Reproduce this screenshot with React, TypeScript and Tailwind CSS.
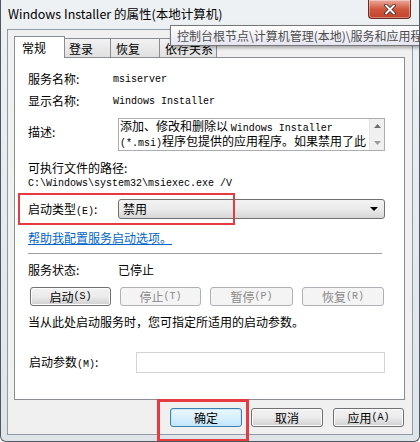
import React from "react";

const mono = "font-['Liberation_Mono',monospace] text-[10px]";

function M({ children }: { children: React.ReactNode }) {
  return <span className={mono}>{children}</span>;
}

function Btn({ label, w, disabled, primary }: { label: React.ReactNode; w: string; disabled?: boolean; primary?: boolean }) {
  const base = "h-[19px] rounded-[3px] border flex items-center justify-center text-[12px] leading-none shrink-0 " + w;
  if (disabled) return <div className={base + " border-[#adb2b5] bg-[#f4f4f4] text-[#8a8a8a]"}>{label}</div>;
  if (primary)
    return <div className={base + " border-[#3c7fb1] bg-gradient-to-b from-[#eaf6fd] via-[#d9f0fc] to-[#bee6fd] shadow-[inset_0_0_0_1px_#c7e7f8]"}>{label}</div>;
  return <div className={base + " border-[#707070] bg-gradient-to-b from-[#f2f2f2] via-[#ebebeb] to-[#cfcfcf] shadow-[inset_0_0_0_1px_#fcfcfc]"}>{label}</div>;
}

export default function App() {
  return (
    <div className="w-[420px] h-[442px] relative overflow-hidden rounded-b-[6px] border-x border-b border-[#4f5862] bg-gradient-to-b from-[#eef1f4] to-[#dfe4e9] font-['Noto_Sans_CJK_SC',sans-serif] text-[12px] text-black">
      {/* title bar */}
      <div className="h-[29px] flex items-center pl-[7px] text-[12.5px] text-black">Windows Installer 的属性(本地计算机)</div>
      <div className="absolute top-0 left-[367px] w-[43px] h-[19px] rounded-b-[4px] border border-t-0 border-[#6b2a22] bg-gradient-to-b from-[#e9a99b] via-[#d0573f] to-[#c2422b] flex items-center justify-center shadow-[inset_0_0_0_1px_rgba(255,255,255,0.35)]">
        <svg width="12" height="11" viewBox="0 0 12 11">
          <path d="M2 1.5 L10 9.5 M10 1.5 L2 9.5" stroke="#3a1a14" strokeWidth="3.4" strokeLinecap="round" />
          <path d="M2 1.5 L10 9.5 M10 1.5 L2 9.5" stroke="#ffffff" strokeWidth="2" strokeLinecap="round" />
        </svg>
      </div>

      {/* client area */}
      <div className="ml-[6px] w-[406px] h-[406px] border border-[#8f9aa5] bg-[#f0f0f0] pt-[6px] pl-[6px]">
        {/* tabs */}
        <div className="flex items-end h-[22px] relative z-10 -mb-px">
          <div className="w-[51px] h-[22px] bg-white border border-b-0 border-[#898c95] pl-[7px] pt-[2px] text-[12px]">常规</div>
          <div className="w-[46px] h-[20px] bg-gradient-to-b from-[#f2f2f2] to-[#e0e0e0] border border-l-0 border-[#898c95] pl-[4px] pt-[1px]">登录</div>
          <div className="w-[49px] h-[20px] bg-gradient-to-b from-[#f2f2f2] to-[#e0e0e0] border border-l-0 border-[#898c95] pl-[5px] pt-[1px]">恢复</div>
          <div className="w-[57px] h-[20px] bg-gradient-to-b from-[#f2f2f2] to-[#e0e0e0] border border-l-0 border-[#898c95] pl-[5px] pt-[1px]">依存关系</div>
        </div>

        {/* panel */}
        <div className="relative w-[391px] h-[343px] bg-white border border-[#898c95] pl-[13px] pt-[13px]">
          <div className="flex items-center h-[16px]">
            <span className="w-[85px]">服务名称:</span>
            <M>msiserver</M>
          </div>
          <div className="flex items-center h-[16px] mt-[6px]">
            <span className="w-[85px]">显示名称:</span>
            <M>Windows Installer</M>
          </div>
          <div className="flex items-start mt-[9px]">
            <span className="w-[90px] mt-[5px]">描述:</span>
            <div className="w-[267px] h-[33px] border border-[#abadb3] flex">
              <div className="flex-1 pl-px leading-[15px] text-[12px] whitespace-nowrap overflow-hidden">
                <div className="h-[15px] -mt-px">添加、修改和删除以 <M>Windows Installer</M></div>
                <div className="h-[15px]"><M>(*.msi)</M>程序包提供的应用程序。如果禁用了此</div>
              </div>
              <div className="w-[15px] bg-[#f0f0f0] border-l border-[#e4e4e4] flex flex-col items-center justify-between py-[5px]">
                <svg width="7" height="4" viewBox="0 0 7 4"><path d="M0 4 L3.5 0 L7 4 Z" fill="#6e6e6e" /></svg>
                <svg width="7" height="4" viewBox="0 0 7 4"><path d="M0 0 L3.5 4 L7 0 Z" fill="#9a9a9a" /></svg>
              </div>
            </div>
          </div>
          <div className="h-[16px] mt-[9px] flex items-center">可执行文件的路径:</div>
          <div className="h-[15px] flex items-center">
            <M>C:\Windows\system32\msiexec.exe /V</M>
          </div>
          <div className="flex items-center mt-[8px]">
            <span className="w-[90px]">启动类型<M>(E)</M>:</span>
            <div className="w-[267px] h-[20px] rounded-[3px] border border-[#707070] bg-gradient-to-b from-[#f2f2f2] via-[#ebebeb] to-[#d6d6d6] flex items-center pl-[4px] pr-[6px] justify-between">
              <span>禁用</span>
              <svg width="8" height="4" viewBox="0 0 8 4"><path d="M0 0 L8 0 L4 4 Z" fill="#000" /></svg>
            </div>
          </div>
          <div className="h-[16px] mt-[11px] flex items-center">
            <span className="text-[#0066cc] underline decoration-[#0066cc]">帮助我配置服务启动选项。</span>
          </div>
          <div className="w-[354px] h-px bg-[#a0a0a0] mt-[7px]" />
          <div className="flex items-center h-[16px] mt-[8px]">
            <span className="w-[90px]">服务状态:</span>
            <span>已停止</span>
          </div>
          <div className="flex items-center mt-[9px] pl-[2px] gap-[9px]">
            <Btn w="w-[81px]" label={<>启动<M>(S)</M></>} />
            <Btn w="w-[81px]" disabled label={<>停止<M>(T)</M></>} />
            <Btn w="w-[83px]" disabled label={<>暂停<M>(P)</M></>} />
            <Btn w="w-[82px]" disabled label={<>恢复<M>(R)</M></>} />
          </div>
          <div className="h-[16px] mt-[8px] flex items-center">当从此处启动服务时，您可指定所适用的启动参数。</div>
          <div className="flex items-center mt-[22px]">
            <span className="w-[108px] pl-[1px]">启动参数<M>(M)</M>:</span>
            <div className="w-[249px] h-[21px] border border-[#d4d4d4] bg-white" />
          </div>

          <div className="absolute left-[3px] top-[135px] w-[217px] h-[32px] border-2 border-[#e53a3f]" />
        </div>

        {/* dialog buttons */}
        <div className="flex justify-end pr-[8px] mt-[8px]">
          <Btn w="w-[72px]" primary label="确定" />
          <div className="w-[9px]" />
          <Btn w="w-[72px]" label="取消" />
          <div className="w-[10px]" />
          <Btn w="w-[71px]" label={<>应用<M>(A)</M></>} />
        </div>
      </div>

      {/* tooltip */}
      <div className="absolute z-20 left-[169px] top-[25px] w-[260px] h-[21px] border border-[#767676] bg-gradient-to-b from-[#ffffff] to-[#e4e5f0] shadow-[1px_2px_3px_rgba(0,0,0,0.3)] pl-[6px] flex items-center text-[12px] text-[#4c4c4c] whitespace-nowrap">
        控制台根节点\计算机管理(本地)\服务和应用程序
      </div>

      {/* highlight around OK */}
      <div className="absolute z-20 left-[156px] top-[399px] w-[92px] h-[43px] border-[3px] border-[#e53a3f]" />
    </div>
  );
}
